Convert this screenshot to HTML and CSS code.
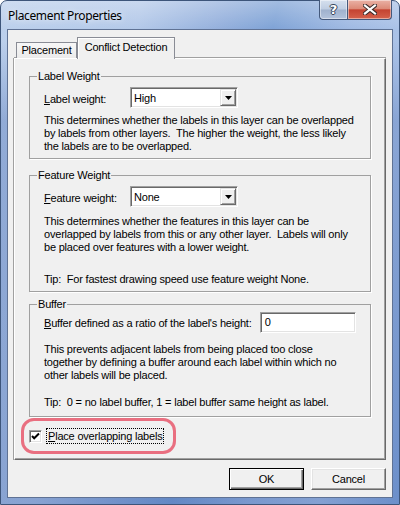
FILE: index.html
```html
<!DOCTYPE html>
<html>
<head>
<meta charset="utf-8">
<title>Placement Properties</title>
<link rel="stylesheet" href="styles.css">
</head>
<body>
<div class="window">
  <div class="titlebar">
    <span class="title">Placement Properties</span>
    <div class="caption">
      <div class="cbtn help"><span class="qmark">?</span></div>
      <div class="cbtn close">
        <svg width="14" height="11" viewBox="0 0 14 11">
          <path d="M2 1.5 L12 9.5 M12 1.5 L2 9.5" stroke="#3a2a2a" stroke-width="4.2" stroke-linecap="square" fill="none"/>
          <path d="M2 1.5 L12 9.5 M12 1.5 L2 9.5" stroke="#ffffff" stroke-width="2.2" stroke-linecap="square" fill="none"/>
        </svg>
      </div>
    </div>
  </div>
  <div class="client">
    <div class="tabs">
      <div class="tab">Placement</div>
      <div class="tab active">Conflict Detection</div>
    </div>
    <div class="panel">
      <fieldset class="group g1">
        <legend>Label Weight</legend>
        <div class="row">
          <span class="lbl"><u>L</u>abel weight:</span>
          <div class="combo"><span class="val">High</span><span class="drop"><svg width="7" height="4" viewBox="0 0 7 4"><path d="M0 0 H7 L3.5 4 Z" fill="#000"/></svg></span></div>
        </div>
        <p>This determines whether the labels in this layer can be overlapped<br>by labels from other layers.&nbsp; The higher the weight, the less likely<br>the labels are to be overlapped.</p>
      </fieldset>
      <fieldset class="group g2">
        <legend>Feature Weight</legend>
        <div class="row">
          <span class="lbl"><u>F</u>eature weight:</span>
          <div class="combo"><span class="val">None</span><span class="drop"><svg width="7" height="4" viewBox="0 0 7 4"><path d="M0 0 H7 L3.5 4 Z" fill="#000"/></svg></span></div>
        </div>
        <p>This determines whether the features in this layer can be<br>overlapped by labels from this or any other layer.&nbsp; Labels will only<br>be placed over features with a lower weight.</p>
        <p class="tip">Tip:&nbsp; For fastest drawing speed use feature weight None.</p>
      </fieldset>
      <fieldset class="group g3">
        <legend>Buffer</legend>
        <div class="row">
          <span class="lbl wide"><u>B</u>uffer defined as a ratio of the label's height:</span>
          <div class="edit">0</div>
        </div>
        <p>This prevents adjacent labels from being placed too close<br>together by defining a buffer around each label within which no<br>other labels will be placed.</p>
        <p class="tip">Tip:&nbsp; 0 = no label buffer, 1 = label buffer same height as label.</p>
      </fieldset>
      <div class="check-row">
        <span class="checkbox"><svg width="9" height="9" viewBox="0 0 9 9"><path d="M1 4 L3.2 6.3 L8 1.5" stroke="#000" stroke-width="2" fill="none"/></svg></span>
        <span class="focus"><u>P</u>lace overlapping labels</span>
        <span class="annot"></span>
      </div>
    </div>
    <div class="buttons">
      <div class="btn default">OK</div>
      <div class="btn">Cancel</div>
    </div>
  </div>
</div>
</body>
</html>
```

FILE: styles.css
```css
html, body {
  margin: 0;
  padding: 0;
}
body {
  width: 400px;
  height: 505px;
  overflow: hidden;
  background: #ffffff;
  font-family: "Liberation Sans", Arial, sans-serif;
  font-size: 11px;
  letter-spacing: -0.2px;
  color: #000;
}
.window {
  box-sizing: border-box;
  width: 400px;
  height: 505px;
  border: 1px solid #3d557a;
  border-radius: 7px 7px 0 0;
  padding: 0 6px 6px;
  display: flex;
  flex-direction: column;
  background:
    linear-gradient(to bottom, rgba(255,255,255,0.28), rgba(255,255,255,0) 28px),
    linear-gradient(to bottom, rgba(40,80,160,0) 0, rgba(40,80,160,0) 40px, rgba(40,80,160,0.28) 120px, rgba(40,80,160,0.32) 100%),
    linear-gradient(102deg, #bcd0ec 0%, #b4c9e9 28%, #93afdc 45%, #7fa3d6 55%, #a0bae3 70%, #afc6e9 84%, #8cadde 100%);
}
.titlebar {
  height: 28px;
  display: flex;
  align-items: flex-start;
}
.title {
  font-family: "Noto Sans", "Open Sans", sans-serif;
  font-size: 12px;
  letter-spacing: -0.35px;
  line-height: 16px;
  margin: 7px 0 0 1px;
  color: #000;
  text-shadow: 0 0 6px rgba(255,255,255,0.9);
}
.caption {
  margin-left: auto;
  margin-right: 1px;
  margin-top: -1px;
  display: flex;
}
.cbtn {
  box-sizing: border-box;
  height: 20px;
  border: 1px solid #44597c;
  border-top: none;
  display: flex;
  align-items: center;
  justify-content: center;
  box-shadow: inset 0 0 0 1px rgba(255,255,255,0.45);
}
.help {
  width: 28px;
  border-right: none;
  border-radius: 0 0 0 4px;
  background: linear-gradient(#d6e0ee 0%, #bfcde2 48%, #9fb1cd 52%, #b3c3dc 100%);
}
.qmark {
  font-family: "DejaVu Sans", sans-serif;
  font-weight: bold;
  font-size: 13px;
  letter-spacing: 0;
  color: #fff;
  line-height: 14px;
  text-shadow: 0 0 1px #2e3a50, 1px 0 0 #3a4860, -1px 0 0 #3a4860, 0 1px 0 #3a4860, 0 -1px 0 #3a4860;
}
.close {
  width: 45px;
  border-radius: 0 0 4px 0;
  background: linear-gradient(#eab2a6 0%, #dc8a78 46%, #c44331 52%, #d5624c 100%);
}
.client {
  flex: 1;
  border: 1px solid #5f7294;
  background: #f0f0f0;
  padding: 7px 6px 7px;
  display: flex;
  flex-direction: column;
}
.tabs {
  display: flex;
  align-items: flex-end;
  height: 21px;
  padding-left: 2px;
  position: relative;
  z-index: 1;
}
.tab {
  box-sizing: border-box;
  height: 16px;
  line-height: 15px;
  border: 1px solid #898c95;
  border-bottom: none;
  background: linear-gradient(#f7f7f7, #ebebeb);
  text-align: center;
}
.tab:first-child {
  width: 61px;
}
.tab.active {
  width: 98px;
  height: 22px;
  margin-bottom: -1px;
  line-height: 19px;
  background: #f0f0f0;
  box-shadow: inset 1px 1px 0 #ffffff;
}
.panel {
  box-sizing: border-box;
  height: 402px;
  border: 1px solid;
  border-color: #ffffff #696969 #696969 #ffffff;
  box-shadow: inset -1px -1px 0 #a0a0a0, -1px 0 0 #a0a0a0, 0 -1px 0 #a0a0a0;
  padding: 11px 14px 0;
}
.group {
  margin: 0;
  border: 1px solid #a0a0a0;
  box-shadow: 1px 1px 0 #ffffff;
  padding: 4px 14px 4px;
  min-width: 0;
}
.group legend {
  padding: 0 1px;
  margin-left: -7px;
  line-height: 13px;
  background: #f0f0f0;
}
.g1 {
  padding-bottom: 5px;
}
.g2 {
  margin-top: 10px;
  padding-bottom: 5px;
}
.g3 {
  margin-top: 6px;
  padding-top: 1px;
  padding-bottom: 7px;
}
.row {
  display: flex;
  align-items: center;
  white-space: nowrap;
}
.lbl {
  width: 86px;
  padding-top: 2px;
}
.lbl.wide {
  width: 220px;
  padding-top: 0;
}
.combo, .edit {
  box-sizing: border-box;
  height: 21px;
  border: 1px solid;
  border-color: #a0a0a0 #ffffff #ffffff #a0a0a0;
  box-shadow: inset 1px 1px 0 #696969, inset -1px -1px 0 #e3e3e3;
  background: #ffffff;
  display: flex;
  align-items: center;
}
.combo {
  width: 108px;
  padding: 0 1px 0 3px;
}
.edit {
  width: 98px;
  padding-left: 4px;
  align-items: flex-start;
  padding-top: 3px;
}
.drop {
  box-sizing: border-box;
  margin-left: auto;
  width: 16px;
  height: 17px;
  background: #f0f0f0;
  border: 1px solid;
  border-color: #e3e3e3 #696969 #696969 #e3e3e3;
  box-shadow: inset 1px 1px 0 #ffffff, inset -1px -1px 0 #a0a0a0;
  display: flex;
  align-items: center;
  justify-content: center;
}
.group p {
  margin: 6px 0 0;
  line-height: 13px;
  white-space: nowrap;
}
.g2 p {
  margin-top: 8px;
}
.g3 p {
  margin-top: 10px;
}
.g2 p.tip {
  margin-top: 19px;
}
.g3 p.tip {
  margin-top: 14px;
}
.check-row {
  position: relative;
  display: flex;
  align-items: center;
  margin-top: 11px;
  height: 16px;
}
.checkbox {
  box-sizing: border-box;
  width: 13px;
  height: 13px;
  border: 1px solid;
  border-color: #a0a0a0 #ffffff #ffffff #a0a0a0;
  box-shadow: inset 1px 1px 0 #696969, inset -1px -1px 0 #e3e3e3;
  background: #ffffff;
  display: flex;
  align-items: center;
  justify-content: center;
}
.focus {
  margin-left: 4px;
  padding: 0 1px;
  line-height: 14px;
  border: 1px dotted #000;
}
.annot {
  position: absolute;
  left: -8px;
  top: -10px;
  width: 155px;
  height: 36px;
  box-sizing: border-box;
  border: 3px solid rgba(230, 55, 80, 0.7);
  border-radius: 13px;
  filter: blur(0.6px);
}
.buttons {
  display: flex;
  justify-content: flex-end;
  gap: 7px;
  margin-top: 8px;
}
.btn {
  box-sizing: border-box;
  width: 75px;
  height: 22px;
  border: 1px solid;
  border-color: #ffffff #696969 #696969 #ffffff;
  box-shadow: inset -1px -1px 0 #a0a0a0, inset 1px 1px 0 #e3e3e3;
  display: flex;
  align-items: center;
  justify-content: center;
}
.btn.default {
  border-color: #000;
  box-shadow: inset 1px 1px 0 #ffffff, inset -1px -1px 0 #696969, inset -2px -2px 0 #a0a0a0;
}
```
